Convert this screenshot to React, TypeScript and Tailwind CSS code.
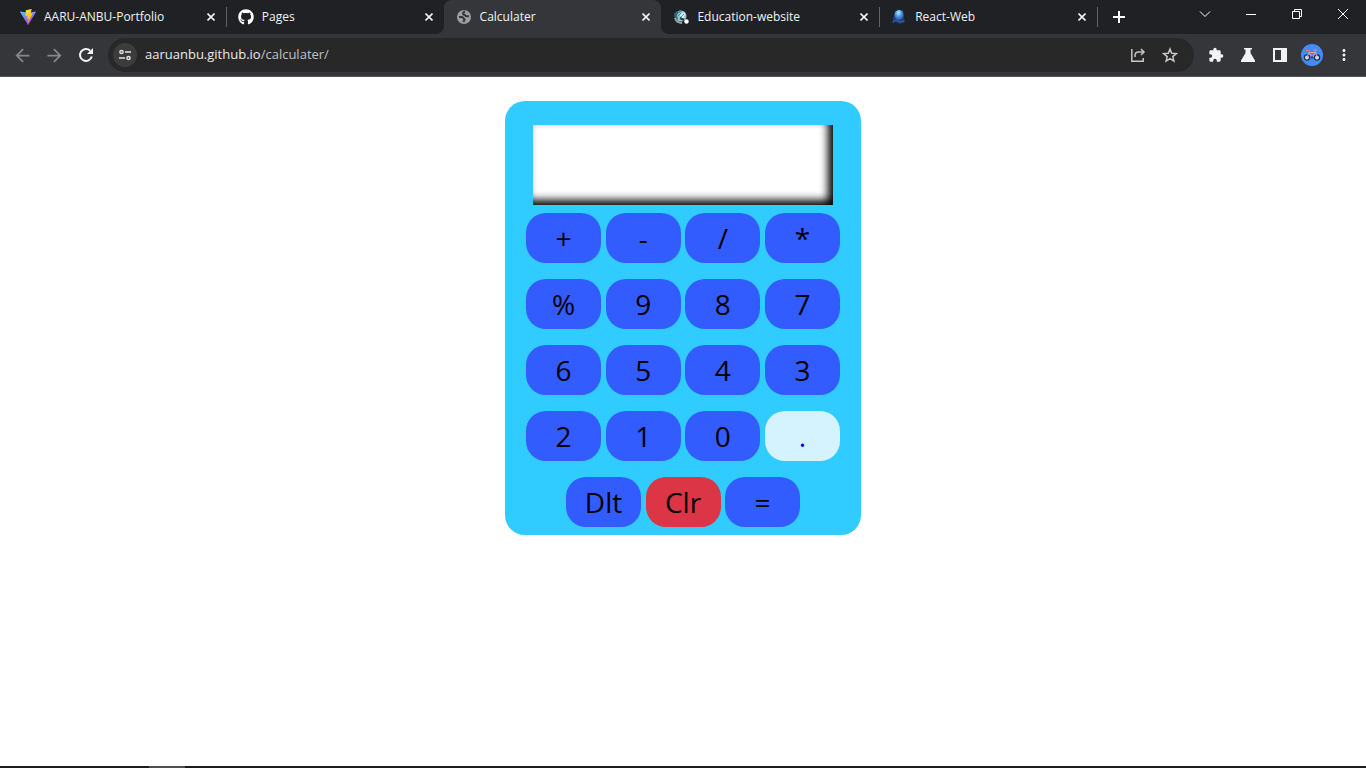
import { useState } from "react";
import type { ReactNode } from "react";
import { FaGithub } from "react-icons/fa";
import { MdArrowBack, MdArrowForward, MdExtension, MdMoreVert } from "react-icons/md";

function ViteIcon() {
  return (
    <svg viewBox="0 0 32 32" className="size-4" aria-hidden="true">
      <defs>
        <linearGradient id="viteBody" x1="0" y1="0" x2="0.6" y2="1">
          <stop offset="0" stopColor="#41d1ff" />
          <stop offset="1" stopColor="#bd34fe" />
        </linearGradient>
        <linearGradient id="viteBolt" x1="0.4" y1="0" x2="0.6" y2="1">
          <stop offset="0" stopColor="#ffea83" />
          <stop offset="0.1" stopColor="#ffdd35" />
          <stop offset="1" stopColor="#ffa800" />
        </linearGradient>
      </defs>
      <path fill="url(#viteBody)" d="M31.9 6.2 17 31.2a.9.9 0 0 1-1.5 0L.1 6.2A.9.9 0 0 1 1 4.9l15 2.7 15-2.7a.9.9 0 0 1 .9 1.3Z" />
      <path fill="url(#viteBolt)" d="M23 .1 12 2.3a.5.5 0 0 0-.4.4l-.7 11.6c0 .3.3.5.5.4l3.1-.7c.3 0 .5.2.5.5l-.9 4.5c-.1.3.2.6.5.5l1.9-.6c.3-.1.6.2.5.5l-1.5 7.1c-.1.4.5.7.8.3l9-17.9c.2-.3-.1-.7-.4-.6l-3.2.6c-.3.1-.6-.2-.5-.5L23.3.6c.1-.3-.1-.5-.3-.5Z" />
    </svg>
  );
}

function GlobeIcon() {
  return (
    <svg viewBox="0 0 16 16" className="size-4" aria-hidden="true">
      <circle cx="8" cy="8" r="7" fill="#9aa0a6" />
      <path
        d="M9 2.5C7.500 3 7 4 7.200 5c.2.900 1.600.6 2 1.500.4.900 1.800.8 3.800.7M3 8h2.600c1.500 0 1.600 1.500 2.700 2 .9.500-.3 1.600-1 3"
        fill="none"
        stroke="#35363a"
        strokeWidth="2"
      />
    </svg>
  );
}

function EducationIcon() {
  return (
    <svg viewBox="0 0 16 16" className="size-4" aria-hidden="true">
      <circle cx="8" cy="7" r="5.5" fill="#9fc3cd" />
      <path d="M1 5 4 2l2 1-2 3 1 5-3-1Z" fill="#276f80" />
      <path d="m6 1 3 1-3 2Z" fill="#2b8ea3" />
      <path d="m7 6 4-3 1 3-3 5Z" fill="#e8f5f6" />
      <path d="m5 7 3-3M7 9l4-4" stroke="#3c8ea3" />
      <path d="M2 9c1 3 3 5 7 5" fill="none" stroke="#8fa9b5" strokeWidth="2" />
      <path d="m7 9 4 2" stroke="#26383f" strokeWidth="2" />
      <circle cx="13.5" cy="12.5" r="2.2" fill="#fff" />
    </svg>
  );
}

function ReactWebIcon() {
  return (
    <svg viewBox="0 0 16 16" className="size-4" aria-hidden="true">
      <defs>
        <radialGradient id="orb" cx="0.45" cy="0.3" r="0.7">
          <stop offset="0" stopColor="#c8eaff" />
          <stop offset="0.4" stopColor="#5aa5ed" />
          <stop offset="1" stopColor="#1c4fa3" />
        </radialGradient>
      </defs>
      <path d="M1 14 3 5l3-3 6-1 1 7 1 5-5 2-4-2Z" fill="#1f3d7a" />
      <ellipse cx="8" cy="6" rx="4.5" ry="5.3" fill="url(#orb)" />
      <path d="m2 13 3-2 4 2 4-1" fill="none" stroke="#35599e" strokeWidth="1.5" />
    </svg>
  );
}

function BicycleIcon() {
  return (
    <svg viewBox="0 0 22 22" className="size-[22px]" aria-hidden="true">
      <circle cx="11" cy="11" r="11" fill="#448aff" />
      <circle cx="6" cy="13.5" r="2.6" fill="#c9e8fa" stroke="#26323b" strokeWidth="1.3" />
      <circle cx="16" cy="13.5" r="2.6" fill="#c9e8fa" stroke="#26323b" strokeWidth="1.3" />
      <path d="m6 13.500 2-5 3.500 5 3-5H8m6-2 2 7" fill="none" stroke="#d3a69c" />
      <path d="M5 6.500h3.500M12 6l3-.5V8" fill="none" stroke="#f27858" strokeWidth="1.2" />
      <circle cx="11" cy="13.5" r="1.2" fill="#4a3242" />
    </svg>
  );
}

function Flare({ side }: { side: "left" | "right" }) {
  return (
    <svg
      viewBox="0 0 8 8"
      className={side === "left" ? "absolute -left-2 bottom-0 size-2" : "absolute -right-2 bottom-0 size-2 -scale-x-100"}
      aria-hidden="true"
    >
      <path d="M8 0v8H0a8 8 0 0 0 8-8Z" fill="#35363a" />
    </svg>
  );
}

type TabInfo = { title: string; icon: ReactNode; active?: boolean; divider?: boolean };

const tabs: TabInfo[] = [
  { title: "AARU-ANBU-Portfolio", icon: <ViteIcon /> },
  { title: "Pages", icon: <FaGithub className="size-4 text-white" />, divider: true },
  { title: "Calculater", icon: <GlobeIcon />, active: true },
  { title: "Education-website", icon: <EducationIcon /> },
  { title: "React-Web", icon: <ReactWebIcon />, divider: true },
];

function Tab({ tab }: { tab: TabInfo }) {
  return (
    <li
      className={
        tab.active
          ? "relative flex min-w-0 flex-1 items-center rounded-t-lg bg-[#35363a] pr-[7px] pl-3"
          : "relative flex min-w-0 flex-1 items-center pr-[7px] pl-3"
      }
    >
      {tab.divider && <span className="absolute top-[7px] left-0 h-5 w-px bg-[#5f6368]" />}
      {tab.active && <Flare side="left" />}
      {tab.active && <Flare side="right" />}
      <a href="#" className="flex min-w-0 flex-1 items-center gap-2">
        <span className="shrink-0">{tab.icon}</span>
        <span className="truncate text-xs text-[#f1f3f4]">{tab.title}</span>
      </a>
      <button type="button" aria-label={`Close ${tab.title}`} className="flex size-4 items-center justify-center">
        <svg viewBox="0 0 8 8" className="size-2" fill="none" stroke="#f1f3f4" strokeWidth="1.6" aria-hidden="true">
          <path d="m.5.5 7 7m0-7-7 7" />
        </svg>
      </button>
    </li>
  );
}

function WindowButton({ label, path }: { label: string; path: string }) {
  return (
    <button type="button" aria-label={label} className="flex h-7 w-[46px] items-center justify-center">
      <svg viewBox="0 0 12 12" className="size-3" fill="none" stroke="#fff" aria-hidden="true">
        <path d={path} />
      </svg>
    </button>
  );
}

function ToolButton({ label, children }: { label: string; children: ReactNode }) {
  return (
    <button type="button" aria-label={label} className="flex size-8 shrink-0 items-center justify-center text-[#f1f3f4]">
      {children}
    </button>
  );
}

function BrowserChrome() {
  return (
    <header className="border-b border-[#57545a] bg-[#35363a]">
      <div className="flex h-[34px] items-stretch bg-[#202124] pl-2">
        <ul className="flex min-w-0 max-w-[1089px] flex-1">
          {tabs.map((tab) => (
            <Tab key={tab.title} tab={tab} />
          ))}
        </ul>
        <div className="flex items-center">
          <span className="h-5 w-px bg-[#5f6368]" />
          <button type="button" aria-label="New tab" className="ml-[7px] flex size-7 items-center justify-center">
            <svg viewBox="0 0 12 12" className="size-3" stroke="#fff" strokeWidth="2" aria-hidden="true">
              <path d="M6 0v12M0 6h12" />
            </svg>
          </button>
        </div>
        <div className="ml-auto flex">
          <WindowButton label="Search tabs" path="m1 3.500 5 5 5-5" />
          <WindowButton label="Minimize" path="M1 6.500h10" />
          <WindowButton label="Restore" path="M1.500 3.500h7v7h-7ZM3.500 3.500v-2h7v7h-2" />
          <WindowButton label="Close window" path="m1 1 10 10M11 1 1 11" />
        </div>
      </div>
      <div className="flex h-[42px] items-center px-1.5">
        <nav className="flex">
          <button type="button" aria-label="Back" className="flex size-8 items-center justify-center text-[#85878a]">
            <MdArrowBack className="size-[21px]" />
          </button>
          <button type="button" aria-label="Forward" className="flex size-8 items-center justify-center text-[#85878a]">
            <MdArrowForward className="size-[21px]" />
          </button>
          <ToolButton label="Reload">
            <svg viewBox="0 0 16 16" className="size-4" aria-hidden="true">
              <path d="M13.800 9.500A6 6 0 1 1 12.200 3.700" fill="none" stroke="currentColor" strokeWidth="2" />
              <path d="M15 1v6H9Z" fill="currentColor" />
            </svg>
          </ToolButton>
        </nav>
        <div className="mr-1.5 ml-1.5 flex h-[34px] flex-1 items-center rounded-full bg-[#282828] pr-2 pl-[5px]">
          <button type="button" aria-label="Site information" className="flex size-6 items-center justify-center rounded-full bg-[#3c3c3c]">
            <svg viewBox="0 0 12 12" className="size-3" fill="none" stroke="#e3e3e3" strokeWidth="1.5" aria-hidden="true">
              <circle cx="2.5" cy="3" r="1.6" />
              <path d="M6 3h6M0 9h6" />
              <circle cx="9.5" cy="9" r="1.6" />
            </svg>
          </button>
          <a href="https://aaruanbu.github.io/calculater/" className="ml-2 flex-1 text-[13px] text-[#bdc1c6]">
            <span className="text-[#e8eaed]">aaruanbu.github.io</span>/calculater/
          </a>
          <button type="button" aria-label="Share" className="flex size-8 items-center justify-center">
            <svg viewBox="0 0 16 16" className="size-4" fill="none" stroke="#c4c7c5" strokeWidth="1.5" aria-hidden="true">
              <path d="M1.800 2v12.200h11.400V11M5 10V8.500c0-2 1-3.500 3.500-3.500H14M11 2l3 3-3 3" />
            </svg>
          </button>
          <button type="button" aria-label="Bookmark" className="flex size-8 items-center justify-center">
            <svg viewBox="0 0 16 16" className="size-4" fill="none" stroke="#c4c7c5" strokeWidth="1.5" aria-hidden="true">
              <path d="m8 2 1.700 4.200 4.600.4-3.500 3 1.100 4.500L8 11.700l-3.900 2.400 1.100-4.500-3.500-3 4.600-.4Z" />
            </svg>
          </button>
        </div>
        <div className="flex">
          <ToolButton label="Extensions">
            <MdExtension className="size-4" />
          </ToolButton>
          <ToolButton label="Experiments">
            <svg viewBox="0 0 14 14" className="size-3.5" aria-hidden="true">
              <path fill="currentColor" d="M3 0h8v1.500H9.500V5L14 12.500V14H0v-1.500L4.500 5V1.500H3Z" />
            </svg>
          </ToolButton>
          <ToolButton label="Side panel">
            <svg viewBox="0 0 14 14" className="size-3.5" aria-hidden="true">
              <path fill="currentColor" fillRule="evenodd" d="M0 0h14v14H0ZM2 2v10h6V2Z" />
            </svg>
          </ToolButton>
          <ToolButton label="Profile">
            <BicycleIcon />
          </ToolButton>
          <ToolButton label="Menu">
            <MdMoreVert className="size-[18px]" />
          </ToolButton>
        </div>
      </div>
    </header>
  );
}

const keyRows = [
  ["+", "-", "/", "*"],
  ["%", "9", "8", "7"],
  ["6", "5", "4", "3"],
  ["2", "1", "0", "."],
];

const keyBase = "h-[50px] w-[75px] rounded-[20px] text-[28px] leading-none";

function keyColor(key: string) {
  if (key === "Clr") return "bg-[#dc3545] text-black";
  if (key === ".") return "bg-[#d4f3ff] text-[#0000ff]";
  return "bg-[#335cff] text-black";
}

function Calculator() {
  const [value, setValue] = useState("");

  const press = (key: string) => {
    if (key === "Clr") setValue("");
    else if (key === "Dlt") setValue(value.slice(0, -1));
    else if (key !== "=") setValue(value + key);
  };

  const renderKey = (key: string) => (
    <button key={key} type="button" onClick={() => press(key)} className={`${keyBase} ${keyColor(key)}`}>
      {key}
    </button>
  );

  return (
    <section className="flex w-[356px] flex-col items-center rounded-[20px] bg-[#30ccff] pt-6 pb-2">
      <input
        type="text"
        aria-label="Result"
        readOnly
        value={value}
        className="h-20 w-[300px] bg-white px-3 text-right text-[28px] shadow-[inset_-5px_-5px_8px_#000] outline-none"
      />
      <div className="mt-2 flex flex-col items-center gap-4">
        {keyRows.map((row) => (
          <div key={row[0]} className="flex w-[314px] justify-between">
            {row.map(renderKey)}
          </div>
        ))}
        <div className="flex w-[234px] justify-between">{["Dlt", "Clr", "="].map(renderKey)}</div>
      </div>
    </section>
  );
}

export default function App() {
  return (
    <div className="flex min-h-screen flex-col bg-white font-['Open_Sans','Noto_Sans',sans-serif]">
      <BrowserChrome />
      <main className="flex flex-1 flex-col items-center pt-6">
        <Calculator />
      </main>
      <footer className="flex h-0.5 bg-[#1b1d20] pl-[149px]">
        <span className="w-9 bg-[#4f4f4f]" />
      </footer>
    </div>
  );
}
